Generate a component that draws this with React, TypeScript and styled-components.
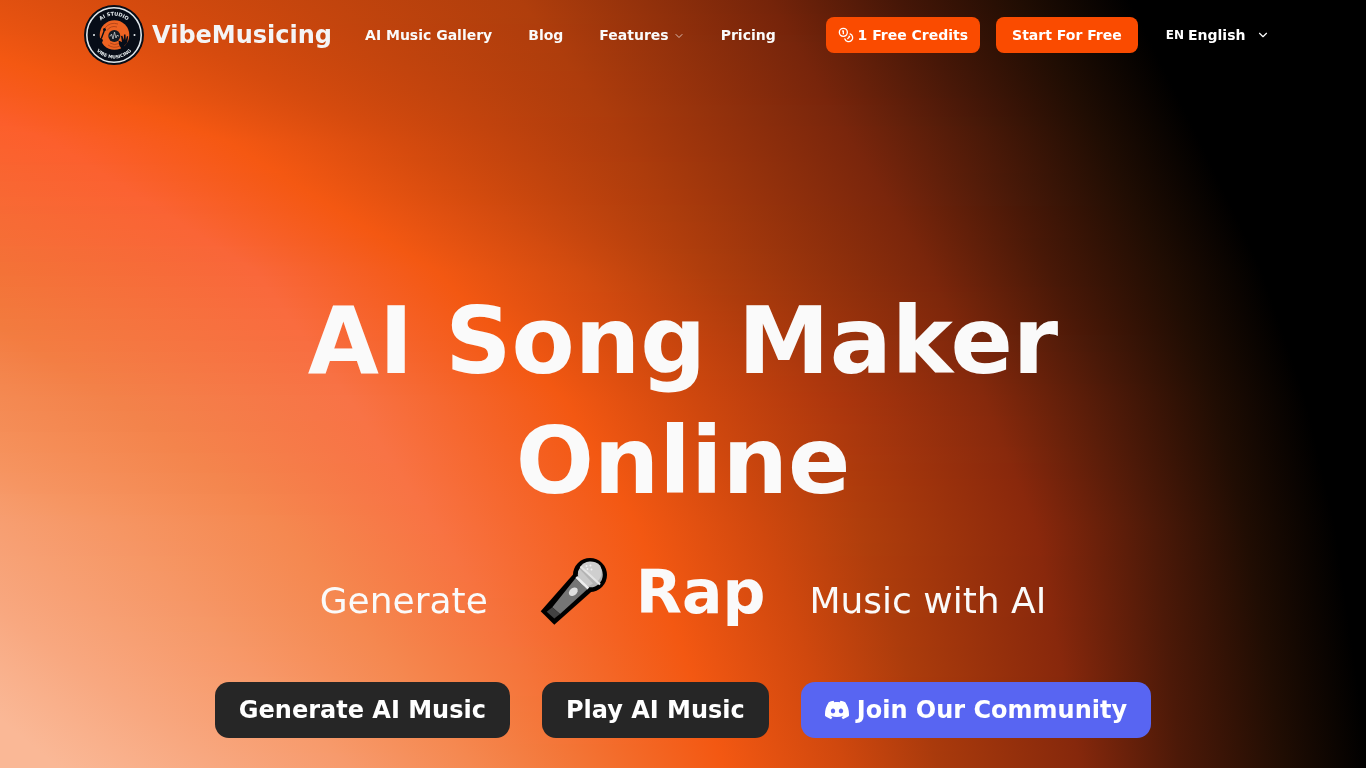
import React, { useLayoutEffect, useRef } from "react";
import styled, { createGlobalStyle } from "styled-components";
import { ChevronDown, Coins } from "lucide-react";
import { SiDiscord } from "react-icons/si";

const GlobalStyle = createGlobalStyle`
  *, *::before, *::after { box-sizing: border-box; }
  body {
    margin: 0;
    background: #000;
    color: #fafafa;
    font-family: "DejaVu Sans", sans-serif;
  }
  a { color: inherit; text-decoration: none; }
  button, select { font: inherit; color: inherit; border: 0; cursor: pointer; }
`;

const Page = styled.div`
  position: relative;
  isolation: isolate;
  min-height: 100vh;
  overflow: hidden;
`;

const BackdropCanvas = styled.canvas`
  position: absolute;
  inset: 0;
  z-index: -1;
  width: 100%;
  height: 100%;
`;

const Header = styled.header`
  display: flex;
  align-items: center;
  max-width: 1198px;
  height: 70px;
  margin: 0 auto;
  font-size: 14px;
  font-weight: 700;
  line-height: 20px;
`;

const Brand = styled.a`
  display: flex;
  align-items: center;
  gap: 8px;
  font-size: 24px;
  line-height: 32px;
  color: #f4f4f5;
`;

const Nav = styled.nav`
  display: flex;
  gap: 4px;
  margin-left: 17px;
`;

const NavLink = styled.a`
  display: flex;
  align-items: center;
  gap: 4px;
  padding: 8px 16px;

  svg { margin-top: 2px; opacity: 0.7; }
`;

const Actions = styled.div`
  display: flex;
  align-items: center;
  gap: 16px;
  margin-left: auto;
`;

const SmallButton = styled.button<{ $pad: number }>`
  display: flex;
  align-items: center;
  gap: 4px;
  height: 36px;
  padding: 0 ${(p) => p.$pad}px;
  border-radius: 8px;
  background: #fa4b00;
  color: #fff;
`;

const Language = styled.label`
  display: flex;
  align-items: center;
  gap: 4px;
  padding: 0 12px;
  color: #fff;
`;

const LanguageCode = styled.span`
  font-size: 12px;
`;

const LanguageSelect = styled.select`
  appearance: none;
  width: 64px;
  padding: 0;
  background: transparent;
`;

const Hero = styled.main`
  display: flex;
  flex-direction: column;
  align-items: center;
  padding: 212px 24px 30px;
`;

const Title = styled.h1`
  max-width: 896px;
  margin: 0;
  font-size: 92px;
  line-height: 120px;
  text-align: center;
`;

const Tagline = styled.p`
  display: flex;
  align-items: baseline;
  gap: 44px;
  margin: 40px 0 60px;
  font-size: 36px;
  line-height: 40px;
`;

const Genre = styled.strong`
  display: flex;
  align-items: baseline;
  gap: 28px;
  font-size: 60px;
  line-height: 60px;

  svg { align-self: center; margin: -5px 0 -3px; }
`;

const ButtonRow = styled.div`
  display: flex;
  flex-wrap: wrap;
  justify-content: center;
  gap: 32px;
`;

const HeroButton = styled.a<{ $tone: string }>`
  display: flex;
  align-items: center;
  gap: 8px;
  height: 56px;
  padding: 0 24px;
  border-radius: 14px;
  background: ${(p) => p.$tone};
  color: #fff;
  font-size: 24px;
  font-weight: 700;
  line-height: 32px;
`;

type Stop = [number, string];
type Row = { y: number; stops: Stop[] };

/* Colour bands of the glow, from the pale corner to black, on a 1366 x 768 grid. */
const ROWS: Row[] = [
  { y: 0, stops: [[-900, "#fab896"], [-780, "#f8a880"], [-640, "#f79a6c"], [-500, "#f47038"], [-340, "#fb5a24"], [-160, "#f35812"], [110, "#d64b0e"], [520, "#b03e0c"], [770, "#75240a"], [900, "#451607"], [1020, "#200d03"], [1130, "#000000"]] },
  { y: 140, stops: [[-780, "#fab896"], [-660, "#f8a880"], [-520, "#f79a6c"], [-360, "#f56e34"], [50, "#fc5f2c"], [225, "#f55812"], [390, "#d64b0e"], [625, "#ac3b0c"], [850, "#7a260c"], [985, "#4a1908"], [1100, "#200d03"], [1200, "#000000"]] },
  { y: 270, stops: [[-640, "#fab896"], [-520, "#f8a880"], [-380, "#f69260"], [-90, "#f27636"], [255, "#f9673a"], [435, "#f35812"], [580, "#d24b0f"], [700, "#b03e0c"], [930, "#7a260b"], [1050, "#481807"], [1165, "#200d03"], [1262, "#000000"]] },
  { y: 400, stops: [[-460, "#fab896"], [-340, "#f8a880"], [-160, "#f6945e"], [115, "#f3824a"], [350, "#f87346"], [565, "#f35812"], [690, "#d0480e"], [840, "#ac360d"], [985, "#86290c"], [1115, "#4c1908"], [1215, "#200d03"], [1306, "#000000"]] },
  { y: 525, stops: [[-240, "#fab896"], [-120, "#f8a880"], [110, "#f69664"], [280, "#f58850"], [435, "#f87343"], [637, "#f35812"], [760, "#d0480e"], [860, "#b03e0c"], [1035, "#8a280c"], [1155, "#4c1908"], [1245, "#200d03"], [1335, "#000000"]] },
  { y: 768, stops: [[60, "#fab896"], [215, "#f8a880"], [350, "#f79a6c"], [475, "#f58850"], [585, "#f37434"], [725, "#f35812"], [845, "#d0480e"], [940, "#a93a0c"], [1080, "#86280c"], [1180, "#4c1908"], [1285, "#200d03"], [1370, "#000000"]] },
];

const channels = (hex: string) => [1, 3, 5].map((i) => parseInt(hex.slice(i, i + 2), 16));
const mix = (a: number, b: number, t: number) => a + (b - a) * t;

function Backdrop() {
  const ref = useRef<HTMLCanvasElement>(null);

  useLayoutEffect(() => {
    const ctx = ref.current?.getContext("2d");
    if (!ctx) return;
    const left = -900;
    const right = 1370;
    for (let y = 0; y < 768; y++) {
      const k = Math.max(1, ROWS.findIndex((r) => r.y > y));
      const a = ROWS[k - 1];
      const b = ROWS[k];
      const t = (y - a.y) / (b.y - a.y);
      const gradient = ctx.createLinearGradient(left, 0, right, 0);
      a.stops.forEach(([xa, ca], i) => {
        const [xb, cb] = b.stops[i];
        const ra = channels(ca);
        const rb = channels(cb);
        const rgb = ra.map((v, n) => Math.round(mix(v, rb[n], t)));
        gradient.addColorStop((mix(xa, xb, t) - left) / (right - left), `rgb(${rgb.join(",")})`);
      });
      ctx.fillStyle = gradient;
      ctx.fillRect(0, y, 1366, 1);
    }
  }, []);

  return <BackdropCanvas ref={ref} width={1366} height={768} aria-hidden="true" />;
}

function Logo() {
  return (
    <svg width="60" height="60" viewBox="0 0 60 60" aria-hidden="true">
      <defs>
        <path id="arc-top" d="M10.5 30a19.5 19.5 0 0 1 39 0" />
        <path id="arc-bottom" d="M6.5 30a23.5 23.5 0 0 0 47 0" />
      </defs>
      <circle cx="30" cy="30" r="30" fill="#070d18" />
      <circle cx="30" cy="30" r="27.2" fill="none" stroke="#dfe6ea" strokeWidth="1.6" />
      <circle cx="30.5" cy="30" r="14.8" fill="#ee6322" />
      <g fill="none" stroke="#a83f16" strokeWidth="0.8">
        <path d="M21 23a12 12 0 0 1 13-4M23 25.5a9 9 0 0 1 10-3.5" />
        <path d="M36 41a12 12 0 0 1-12-1M35 38.5a9 9 0 0 1-9-.5" />
      </g>
      <circle cx="30.3" cy="31" r="6" fill="#131a22" />
      <path d="M25.5 31h1l1-2 1.5 5 1.5-7 1.5 6 1.2-3 .8 1h1" fill="none" stroke="#c6c8c8" strokeWidth="0.8" />
      <path d="M20.5 25l-3 8" fill="none" stroke="#070d18" strokeWidth="1.4" strokeLinecap="round" />
      <circle cx="20.5" cy="24.5" r="1.5" fill="#070d18" />
      <path d="M14 34l3-1 2 2-1 3 2 5-4 0-3-5z" fill="#070d18" />
      <path d="M34.5 35.5l3.5 1.500-1-6 1.400-.3 1.400 4.300.2-5.500h1.500l.3 5.500 1.200-4 1.200.5-1 6.500-3 3 1 3-3 1-3-5z" fill="#070d18" />
      <circle cx="10" cy="30" r="1" fill="#e8eef0" />
      <circle cx="50.5" cy="30" r="1" fill="#e8eef0" />
      <g fill="#e8eef0" fontSize="5" fontWeight="700" textAnchor="middle">
        <text><textPath href="#arc-top" startOffset="50%">AI STUDIO</textPath></text>
        <text fontSize="4.5"><textPath href="#arc-bottom" startOffset="50%">VIBE MUSICING</textPath></text>
      </g>
    </svg>
  );
}

function Microphone() {
  return (
    <svg width="76" height="68" viewBox="-8 0 76 68" aria-hidden="true">
      <path d="M.7 54.3 33.5 17 52.5 33.7 14.3 67.7z" />
      <circle cx="50" cy="18" r="17" />
      <path d="M12.3 50.3 35.5 21.3 47.3 32.3 20 57z" fill="#757575" />
      <path d="M6.7 54.7 12.3 50.3 20 57 14.3 61.5z" fill="#424242" />
      <circle cx="50.3" cy="17.8" r="12.5" fill="#b4b4b4" />
      <path d="M40 10.5a12.5 12.5 0 0 1 20-2c3 5 2 12-3 16.5z" fill="#cfcfcf" />
      <path d="M38 15c0 7 4 13 11 14l4-2.5L39.5 12z" fill="#c9c9c9" />
      <path d="M40.5 9.5 60 27.5" stroke="#e4e4e4" strokeWidth="2.2" />
      <path d="M36.3 20 48.3 31.5" stroke="#eeeeee" strokeWidth="2.6" />
      <ellipse cx="33.3" cy="34.7" rx="5" ry="3.6" fill="#e0e0e0" transform="rotate(-42 33.3 34.7)" />
      <g fill="#f2f2f2">
        <circle cx="46.5" cy="9" r="1" />
        <circle cx="50.5" cy="8.5" r="1" />
        <circle cx="51.5" cy="12.5" r="1" />
        <circle cx="47.5" cy="12" r="1" />
      </g>
    </svg>
  );
}

export default function App() {
  return (
    <Page>
      <GlobalStyle />
      <Backdrop />
      <Header>
        <Brand href="#">
          <Logo />
          VibeMusicing
        </Brand>
        <Nav>
          <NavLink href="#gallery">AI Music Gallery</NavLink>
          <NavLink href="#blog">Blog</NavLink>
          <NavLink href="#features">
            Features
            <ChevronDown size={12} />
          </NavLink>
          <NavLink href="#pricing">Pricing</NavLink>
        </Nav>
        <Actions>
          <SmallButton type="button" $pad={12}>
            <Coins size={16} />
            1 Free Credits
          </SmallButton>
          <SmallButton type="button" $pad={16}>Start For Free</SmallButton>
          <Language>
            <LanguageCode>EN</LanguageCode>
            <LanguageSelect aria-label="Language" defaultValue="en">
              <option value="en">English</option>
            </LanguageSelect>
            <ChevronDown size={14} />
          </Language>
        </Actions>
      </Header>
      <Hero>
        <Title>AI Song Maker Online</Title>
        <Tagline>
          <span>Generate</span>
          <Genre>
            <Microphone />
            Rap
          </Genre>
          <span>Music with AI</span>
        </Tagline>
        <ButtonRow>
          <HeroButton href="#generate" $tone="#262626">Generate AI Music</HeroButton>
          <HeroButton href="#play" $tone="#262626">Play AI Music</HeroButton>
          <HeroButton href="#community" $tone="#5865f2">
            <SiDiscord size={24} />
            Join Our Community
          </HeroButton>
        </ButtonRow>
      </Hero>
    </Page>
  );
}
